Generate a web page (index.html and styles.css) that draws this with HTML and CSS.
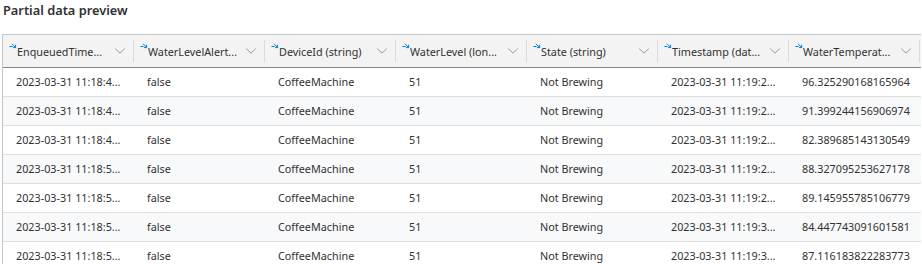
FILE: index.html
```html
<!DOCTYPE html>
<html>
<head>
<meta charset="utf-8">
<link rel="stylesheet" href="styles.css">
</head>
<body>
<h2 class="title">Partial data preview</h2>
<div class="table">
  <div class="head">
    <div class="hcell"><svg class="ico" viewBox="0 0 8 7"><path d="M0.5 3.5H3.5M3 0.8L6.6 4.4M6.6 1.8V4.6H4"/></svg><span class="hname">EnqueuedTime...</span><svg class="chev" viewBox="0 0 12 7"><path d="M0.5 0.8L6 6L11.5 0.8"/></svg><i class="sep"></i></div>
    <div class="hcell"><svg class="ico" viewBox="0 0 8 7"><path d="M0.5 3.5H3.5M3 0.8L6.6 4.4M6.6 1.8V4.6H4"/></svg><span class="hname">WaterLevelAlert...</span><svg class="chev" viewBox="0 0 12 7"><path d="M0.5 0.8L6 6L11.5 0.8"/></svg><i class="sep"></i></div>
    <div class="hcell"><svg class="ico" viewBox="0 0 8 7"><path d="M0.5 3.5H3.5M3 0.8L6.6 4.4M6.6 1.8V4.6H4"/></svg><span class="hname">DeviceId (string)</span><svg class="chev" viewBox="0 0 12 7"><path d="M0.5 0.8L6 6L11.5 0.8"/></svg><i class="sep"></i></div>
    <div class="hcell"><svg class="ico" viewBox="0 0 8 7"><path d="M0.5 3.5H3.5M3 0.8L6.6 4.4M6.6 1.8V4.6H4"/></svg><span class="hname">WaterLevel (lon...</span><svg class="chev" viewBox="0 0 12 7"><path d="M0.5 0.8L6 6L11.5 0.8"/></svg><i class="sep"></i></div>
    <div class="hcell"><svg class="ico" viewBox="0 0 8 7"><path d="M0.5 3.5H3.5M3 0.8L6.6 4.4M6.6 1.8V4.6H4"/></svg><span class="hname">State (string)</span><svg class="chev" viewBox="0 0 12 7"><path d="M0.5 0.8L6 6L11.5 0.8"/></svg><i class="sep"></i></div>
    <div class="hcell"><svg class="ico" viewBox="0 0 8 7"><path d="M0.5 3.5H3.5M3 0.8L6.6 4.4M6.6 1.8V4.6H4"/></svg><span class="hname">Timestamp (dat...</span><svg class="chev" viewBox="0 0 12 7"><path d="M0.5 0.8L6 6L11.5 0.8"/></svg><i class="sep"></i></div>
    <div class="hcell"><svg class="ico" viewBox="0 0 8 7"><path d="M0.5 3.5H3.5M3 0.8L6.6 4.4M6.6 1.8V4.6H4"/></svg><span class="hname">WaterTemperat...</span><svg class="chev" viewBox="0 0 12 7"><path d="M0.5 0.8L6 6L11.5 0.8"/></svg><i class="sep"></i></div>
  </div>
  <div class="row"><span>2023-03-31 11:18:4...</span><span>false</span><span>CoffeeMachine</span><span>51</span><span>Not Brewing</span><span>2023-03-31 11:19:2...</span><span>96.325290168165964</span></div>
  <div class="row alt"><span>2023-03-31 11:18:4...</span><span>false</span><span>CoffeeMachine</span><span>51</span><span>Not Brewing</span><span>2023-03-31 11:19:2...</span><span>91.399244156906974</span></div>
  <div class="row"><span>2023-03-31 11:18:4...</span><span>false</span><span>CoffeeMachine</span><span>51</span><span>Not Brewing</span><span>2023-03-31 11:19:2...</span><span>82.389685143130549</span></div>
  <div class="row alt"><span>2023-03-31 11:18:5...</span><span>false</span><span>CoffeeMachine</span><span>51</span><span>Not Brewing</span><span>2023-03-31 11:19:2...</span><span>88.327095253627178</span></div>
  <div class="row"><span>2023-03-31 11:18:5...</span><span>false</span><span>CoffeeMachine</span><span>51</span><span>Not Brewing</span><span>2023-03-31 11:19:2...</span><span>89.145955785106779</span></div>
  <div class="row alt"><span>2023-03-31 11:18:5...</span><span>false</span><span>CoffeeMachine</span><span>51</span><span>Not Brewing</span><span>2023-03-31 11:19:3...</span><span>84.447743091601581</span></div>
  <div class="row"><span>2023-03-31 11:18:5...</span><span>false</span><span>CoffeeMachine</span><span>51</span><span>Not Brewing</span><span>2023-03-31 11:19:3...</span><span>87.116183822283773</span></div>
</div>
</body>
</html>
```
FILE: styles.css
```css
* { box-sizing: border-box; }
html, body { margin: 0; padding: 0; background: #fff; overflow: hidden; }
body {
  font-family: "Noto Sans", "Open Sans", sans-serif;
  color: #323130;
  width: 922px;
  height: 264px;
}
.title {
  margin: 0;
  padding: 1px 0 0 3px;
  height: 34px;
  font-size: 12.8px;
  font-weight: 600;
  line-height: 18px;
  color: #323130;
}
.table {
  margin-left: 2px;
  width: 919px;
  border: 1px solid #c8c6c4;
  border-right: none;
}
.head {
  display: grid;
  grid-template-columns: repeat(7, 131px);
  height: 33px;
  background: #f3f3f3;
  border-bottom: 1px solid #8a8886;
}
.hcell {
  display: flex;
  align-items: center;
  padding-left: 6px;
  font-size: 10.8px;
  white-space: nowrap;
  overflow: hidden;
}
.ico {
  width: 8px;
  height: 7px;
  flex: none;
  align-self: flex-start;
  margin-top: 8px;
  fill: none;
  stroke: #0078d4;
  stroke-width: 1;
}
.hname { flex: 1; overflow: hidden; }
.chev {
  width: 12px;
  height: 6px;
  flex: none;
  margin-right: 7px;
  fill: none;
  stroke: #8a8886;
  stroke-width: 1;
}
.sep {
  width: 1px;
  height: 22px;
  flex: none;
  background: #dcdad8;
}
.row {
  display: grid;
  grid-template-columns: repeat(7, 131px);
  height: 29px;
  border-bottom: 1px solid #e1dfdd;
  font-size: 10.8px;
  line-height: 28px;
}
.row.alt { background: #f8f9fb; }
.row span { padding-left: 13px; white-space: nowrap; overflow: hidden; }
```
